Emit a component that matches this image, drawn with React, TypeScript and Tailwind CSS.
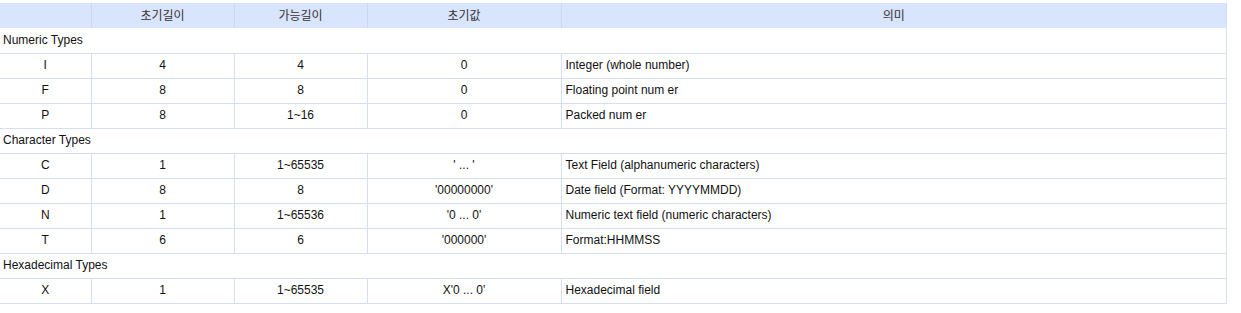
type Row =
  | { section: string }
  | { type: string; init: string; range: string; value: string; meaning: string }

const rows: Row[] = [
  { section: 'Numeric Types' },
  { type: 'I', init: '4', range: '4', value: '0', meaning: 'Integer (whole number)' },
  { type: 'F', init: '8', range: '8', value: '0', meaning: 'Floating point num er' },
  { type: 'P', init: '8', range: '1~16', value: '0', meaning: 'Packed num er' },
  { section: 'Character Types' },
  { type: 'C', init: '1', range: '1~65535', value: "' ... '", meaning: 'Text Field (alphanumeric characters)' },
  { type: 'D', init: '8', range: '8', value: "'00000000'", meaning: 'Date field (Format: YYYYMMDD)' },
  { type: 'N', init: '1', range: '1~65536', value: "'0 ... 0'", meaning: 'Numeric text field (numeric characters)' },
  { type: 'T', init: '6', range: '6', value: "'000000'", meaning: 'Format:HHMMSS' },
  { section: 'Hexadecimal Types' },
  { type: 'X', init: '1', range: '1~65535', value: "X'0 ... 0'", meaning: 'Hexadecimal field' },
]

const cell = 'h-[25px] border-b border-r border-[#d4def6] pb-px text-center align-middle'

export default function App() {
  return (
    <div className="bg-white pt-[3px] font-['Liberation_Sans','Noto_Sans_CJK_KR',sans-serif] text-[12px] text-[#111]">
      <table className="w-[1227px] table-fixed border-collapse">
        <colgroup>
          <col className="w-[91px]" />
          <col className="w-[143px]" />
          <col className="w-[133px]" />
          <col className="w-[194px]" />
          <col />
        </colgroup>
        <thead>
          <tr className="bg-[#d9e4fd] text-[#333]">
            <th className="h-[25px] border-r border-[#cbd7f1] font-normal" />
            <th className="h-[25px] border-r border-[#cbd7f1] font-normal">초기길이</th>
            <th className="h-[25px] border-r border-[#cbd7f1] font-normal">가능길이</th>
            <th className="h-[25px] border-r border-[#cbd7f1] font-normal">초기값</th>
            <th className="h-[25px] border-r border-[#d4def6] font-normal">의미</th>
          </tr>
        </thead>
        <tbody>
          {rows.map((row, i) =>
            'section' in row ? (
              <tr key={i}>
                <td colSpan={5} className="h-[25px] border-b border-r border-[#d4def6] px-[3px] pb-px text-left">
                  {row.section}
                </td>
              </tr>
            ) : (
              <tr key={i}>
                <td className={cell}>{row.type}</td>
                <td className={cell}>{row.init}</td>
                <td className={cell}>{row.range}</td>
                <td className={cell}>{row.value}</td>
                <td className="h-[25px] border-b border-r border-[#d4def6] px-[4px] pb-px text-left">{row.meaning}</td>
              </tr>
            ),
          )}
        </tbody>
      </table>
    </div>
  )
}
